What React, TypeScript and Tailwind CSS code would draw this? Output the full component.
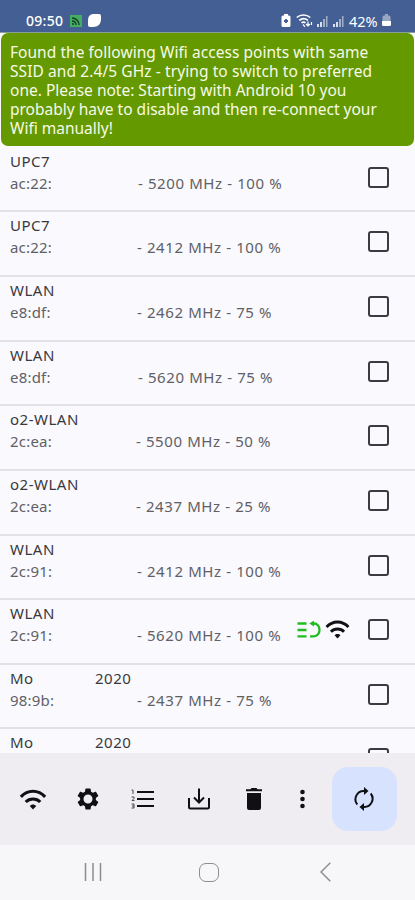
import React, { useState } from "react";

const networks = [
  { name: "UPC7", mac: "ac:22:", info: "- 5200 MHz - 100 %", pad: "w-[128px]" },
  { name: "UPC7", mac: "ac:22:", info: "- 2412 MHz - 100 %", pad: "w-[127px]" },
  { name: "WLAN", mac: "e8:df:", info: "- 2462 MHz - 75 %", pad: "w-[127px]" },
  { name: "WLAN", mac: "e8:df:", info: "- 5620 MHz - 75 %", pad: "w-[128px]" },
  { name: "o2-WLAN", mac: "2c:ea:", info: "- 5500 MHz - 50 %", pad: "w-[126px]" },
  { name: "o2-WLAN", mac: "2c:ea:", info: "- 2437 MHz - 25 %", pad: "w-[126px]" },
  { name: "WLAN", mac: "2c:91:", info: "- 2412 MHz - 100 %", pad: "w-[127px]" },
  { name: "WLAN", mac: "2c:91:", info: "- 5620 MHz - 100 %", pad: "w-[127px]", active: true },
  { name: "Mo", suffix: "2020", mac: "98:9b:", info: "- 2437 MHz - 75 %", pad: "w-[127px]" },
  { name: "Mo", suffix: "2020" },
];

const WifiIcon = ({ className }: { className: string }) => (
  <svg viewBox="0 0 28 22" className={className} fill="none" stroke="currentColor" strokeWidth="3.300">
    <path d="M1.300 8.200C8.500 .4 19.500 .4 26.700 8.200" />
    <path d="M6.400 13.600C10.500 9.400 17.500 9.400 21.600 13.600" />
    <path d="M14 21.500l-3.400-3.700c1.700-2.200 5.100-2.200 6.800 0z" fill="currentColor" stroke="none" />
  </svg>
);

const SignalIcon = () => (
  <svg viewBox="0 0 11 12" className="h-[12px] w-[11px]" fill="#fff">
    <path d="M0 9h2v3H0zM3 7h2v5H3z" opacity=".8" />
    <path d="M6 4h2v8H6zM9 1h1.500v11H9z" opacity=".5" />
  </svg>
);

const StatusBar = () => (
  <div className="flex h-[33px] shrink-0 items-start border-b border-[#8a9f93] bg-[#435f93] pl-[26px] pr-[24px] pt-[11px] text-white">
    <span className="w-[38px] whitespace-nowrap text-[14px] font-medium leading-[20px] tracking-[0.3px]">09:50</span>
    <svg viewBox="0 0 12 12" className="ml-[6px] mt-[4px] h-[12px] w-[12px]">
      <path d="M0 0h12v12H0z" fill="#43ae61" />
      <path d="M2 3c4 0 7 3 7 7M2 6c2.500 0 4 1.500 4 4" stroke="#173e2a" strokeWidth="1.400" fill="none" />
      <circle cx="3" cy="9" r="1" fill="#173e2a" />
    </svg>
    <svg viewBox="0 0 13 13" className="ml-[6px] mt-[3px] h-[13px] w-[13px]" fill="#fff">
      <path d="M6 0h5q2 0 2 2v3c0 5-3 8-8 8H2q-2 0-2-2V7c0-5 2-7 6-7z" />
    </svg>
    <div className="ml-auto flex items-start">
      <svg viewBox="0 0 10 13" className="mt-[3px] h-[13px] w-[10px]">
        <path d="M3 0h4v1.500h1Q9.500 1.500 9.500 3v8.500Q9.500 13 8 13H2Q.5 13 .5 11.500V3Q.5 1.500 2 1.500h1z" fill="#fff" />
        <path d="M5 5v4M3 7h4" stroke="#435f93" strokeWidth="1.900" />
      </svg>
      <svg viewBox="0 0 17 13" className="ml-[5px] mt-[3px] h-[13px] w-[17px]" fill="none" stroke="#fff">
        <path d="M.7 3.500C4.500.2 10.500.2 14.300 3.500" strokeWidth="1.600" />
        <path d="M3.200 6.300c2.600-2 6.200-2 8.700 0M5.500 8.800q2-1.300 4 0" strokeWidth="1.700" />
        <path d="M7 10.500l2 2.300M12 7.500v4.500M10 10l2 2 2-2M15.500 11V8" strokeWidth="1.200" />
      </svg>
      <div className="ml-[4px] mt-[4px] flex gap-[5px]">
        <SignalIcon />
        <SignalIcon />
      </div>
      <span className="ml-[5px] w-[31px] whitespace-nowrap text-[14.500px] leading-[20px]">42%</span>
      <svg viewBox="0 0 9 13" className="ml-[2px] mt-[3px] h-[13px] w-[9px]" fill="#fff">
        <path d="M3 0h3v1.500h1Q8.500 1.500 8.500 3v4h-8V3q0-1.500 1.500-1.500H3z" opacity=".45" />
        <path d="M0 7h9v3.500Q9 12 7.500 12h-6Q0 12 0 10.500z" />
      </svg>
    </div>
  </div>
);

const Banner = () => (
  <div className="mx-[1px] h-[113px] shrink-0 whitespace-nowrap rounded-[7px] bg-[#659900] pl-[9px] pt-[10px] text-[15.500px] leading-[19px] text-[#f6fbe9]">
    <p>
      <span className="tracking-[0.040px]">Found the following Wifi access points with same</span>
      <br />
      <span className="tracking-[0.090px]">SSID and 2.4/5 GHz - trying to switch to preferred</span>
      <br />
      one. Please note: Starting with Android 10 you
      <br />
      probably have to disable and then re-connect your
      <br />
      Wifi manually!
    </p>
  </div>
);

const NetworkRow = ({ item }: { item: any }) => {
  const [checked, setChecked] = useState(false);
  return (
    <div className="flex h-[64.650px] shrink-0 border-b-2 border-[#e2e1e6] pl-[10px] pr-[26px]">
      <div className="w-[287px] shrink-0 whitespace-nowrap pt-[2px] text-[15px] leading-[22px]">
        <div className="flex tracking-[0.500px] text-[#39393d]">
          <span className={item.suffix ? "w-[85px]" : ""}>{item.name}</span>
          {item.suffix && <span>{item.suffix}</span>}
        </div>
        {item.mac && (
          <div className="flex text-[#606065]">
            <span className={`tracking-[0.200px] ${item.pad}`}>{item.mac}</span>
            <span className="tracking-[0.600px]">{item.info}</span>
          </div>
        )}
      </div>
      {item.active && (
        <div className="flex items-start pt-[20px] text-[#111114]">
          <svg viewBox="0 0 24 18" className="mt-[1px] h-[18px] w-[24px]" fill="none" stroke="#1fbd1f" strokeWidth="2.300">
            <path d="M.5 2.500h9M.5 9h9M.5 15.300h9M13 15.300h4c3 0 5.500-2.600 5.500-6.300S20 2.500 17 2.500h-2" />
            <path d="M17 -.5v6l-4.700-3z" fill="#1fbd1f" stroke="none" />
          </svg>
          <WifiIcon className="ml-[4px] h-[19px] w-[25px]" />
        </div>
      )}
      <button
        onClick={() => setChecked(!checked)}
        className={`ml-auto mt-[19px] h-[21px] w-[21px] shrink-0 rounded-[3px] border-2 border-[#3b3b41] ${checked ? "bg-[#3b3b41]" : ""}`}
      />
    </div>
  );
};

const Toolbar = () => (
  <div className="flex h-[92px] shrink-0 items-center bg-[#efedf2] pl-[19px] text-[#101014]">
    <WifiIcon className="h-[21px] w-[28px]" />
    <svg viewBox="2 2 20 20" className="ml-[30px] h-[22px] w-[22px]" fill="currentColor">
      <path fillRule="evenodd" d="M19.140 12.940c.04-.3.060-.61.060-.94s-.02-.64-.07-.94l2.030-1.580a.49.49 0 0 0 .12-.61l-1.920-3.320a.49.49 0 0 0-.59-.22l-2.390.96a7 7 0 0 0-1.620-.94l-.36-2.540A.48.48 0 0 0 13.920 2.400h-3.840a.48.48 0 0 0-.48.41l-.36 2.540c-.59.24-1.130.57-1.620.94l-2.390-.96a.49.49 0 0 0-.59.22L2.720 8.870a.48.48 0 0 0 .12.61l2.030 1.580a6.500 6.500 0 0 0 0 1.880l-2.030 1.580a.49.49 0 0 0-.12.61l1.920 3.320c.12.22.37.29.59.22l2.390-.96c.5.38 1.030.7 1.620.94l.36 2.540c.05.24.24.41.48.41h3.840c.24 0 .44-.17.47-.41l.36-2.540c.59-.24 1.130-.56 1.620-.94l2.390.96c.22.08.47 0 .59-.22l1.920-3.320a.48.48 0 0 0-.12-.61zM12 16.100A4.100 4.100 0 1 1 12 7.900a4.100 4.100 0 0 1 0 8.200z" />
    </svg>
    <svg viewBox="0 0 23 20" className="ml-[32px] h-[20px] w-[23px]" fill="none" stroke="currentColor">
      <path d="M6 3h17M6 10h17M6 17h17" strokeWidth="2" />
      <path d="M.5 1H2v4M.5 8H3v1.500l-2 2h2.500M.5 15H3v4H.5M1 17h2" strokeWidth=".9" opacity=".8" />
    </svg>
    <svg viewBox="0 0 22 22" className="ml-[34px] h-[22px] w-[22px]" fill="none" stroke="currentColor" strokeWidth="2">
      <path d="M1 10v9q0 1.500 1.500 1.500h17q1.500 0 1.500-1.500v-9M11 .5v13.500M6 9.500l5 5 5-5" />
    </svg>
    <svg viewBox="0 0 16 22" className="ml-[36px] h-[22px] w-[16px]" fill="currentColor">
      <path d="M0 1.200h4.500L5.500 0h5l1 1.200H16v2H0zM1 5h14v15q0 2-2 2H3q-2 0-2-2z" />
    </svg>
    <svg viewBox="0 0 6 20" className="ml-[38px] h-[20px] w-[6px]" fill="currentColor">
      <circle cx="2.500" cy="3" r="2.300" />
      <circle cx="2.500" cy="10" r="2.300" />
      <circle cx="2.500" cy="17" r="2.300" />
    </svg>
    <button className="ml-[26px] flex h-[64px] w-[65px] items-center justify-center rounded-[16px] bg-[#d7e2ff]">
      <svg viewBox="0 0 20 24" className="mr-[1px] h-[24px] w-[20px]" fill="none" stroke="currentColor" strokeWidth="2">
        <path d="M3.300 17.500A8.300 8.300 0 0 1 10 4h2M16.700 6.500A8.300 8.300 0 0 1 10 20H8" />
        <path d="M10 0l4.500 4L10 8zM10 16l-4.500 4L10 24z" fill="currentColor" stroke="none" />
      </svg>
    </button>
  </div>
);

const NavBar = () => (
  <div className="flex h-[55px] shrink-0 items-center bg-[#f7f7fa] pb-[1px] pl-[84px] text-[#8d8d91]">
    <svg viewBox="0 0 18 18" className="h-[18px] w-[18px]" fill="none" stroke="currentColor" strokeWidth="1.500">
      <path d="M1.500 0v18M9 0v18M16.500 0v18" />
    </svg>
    <div className="ml-[97px] h-[19px] w-[20px] rounded-[7px] border-[1.500px] border-[#8d8d91]" />
    <svg viewBox="0 0 11 20" className="ml-[101px] h-[20px] w-[11px]" fill="none" stroke="currentColor" strokeWidth="1.500">
      <path d="M10.300 .8L1 10l9.300 9.200" />
    </svg>
  </div>
);

export default function App() {
  return (
    <div className="flex h-[900px] w-[415px] flex-col overflow-hidden bg-[#faf9fe] font-['Noto_Sans',sans-serif]">
      <StatusBar />
      <Banner />
      <div className="flex min-h-0 flex-1 flex-col overflow-hidden pt-[1.700px]">
        {networks.map((item, i) => (
          <NetworkRow key={i} item={item} />
        ))}
      </div>
      <Toolbar />
      <NavBar />
    </div>
  );
}
